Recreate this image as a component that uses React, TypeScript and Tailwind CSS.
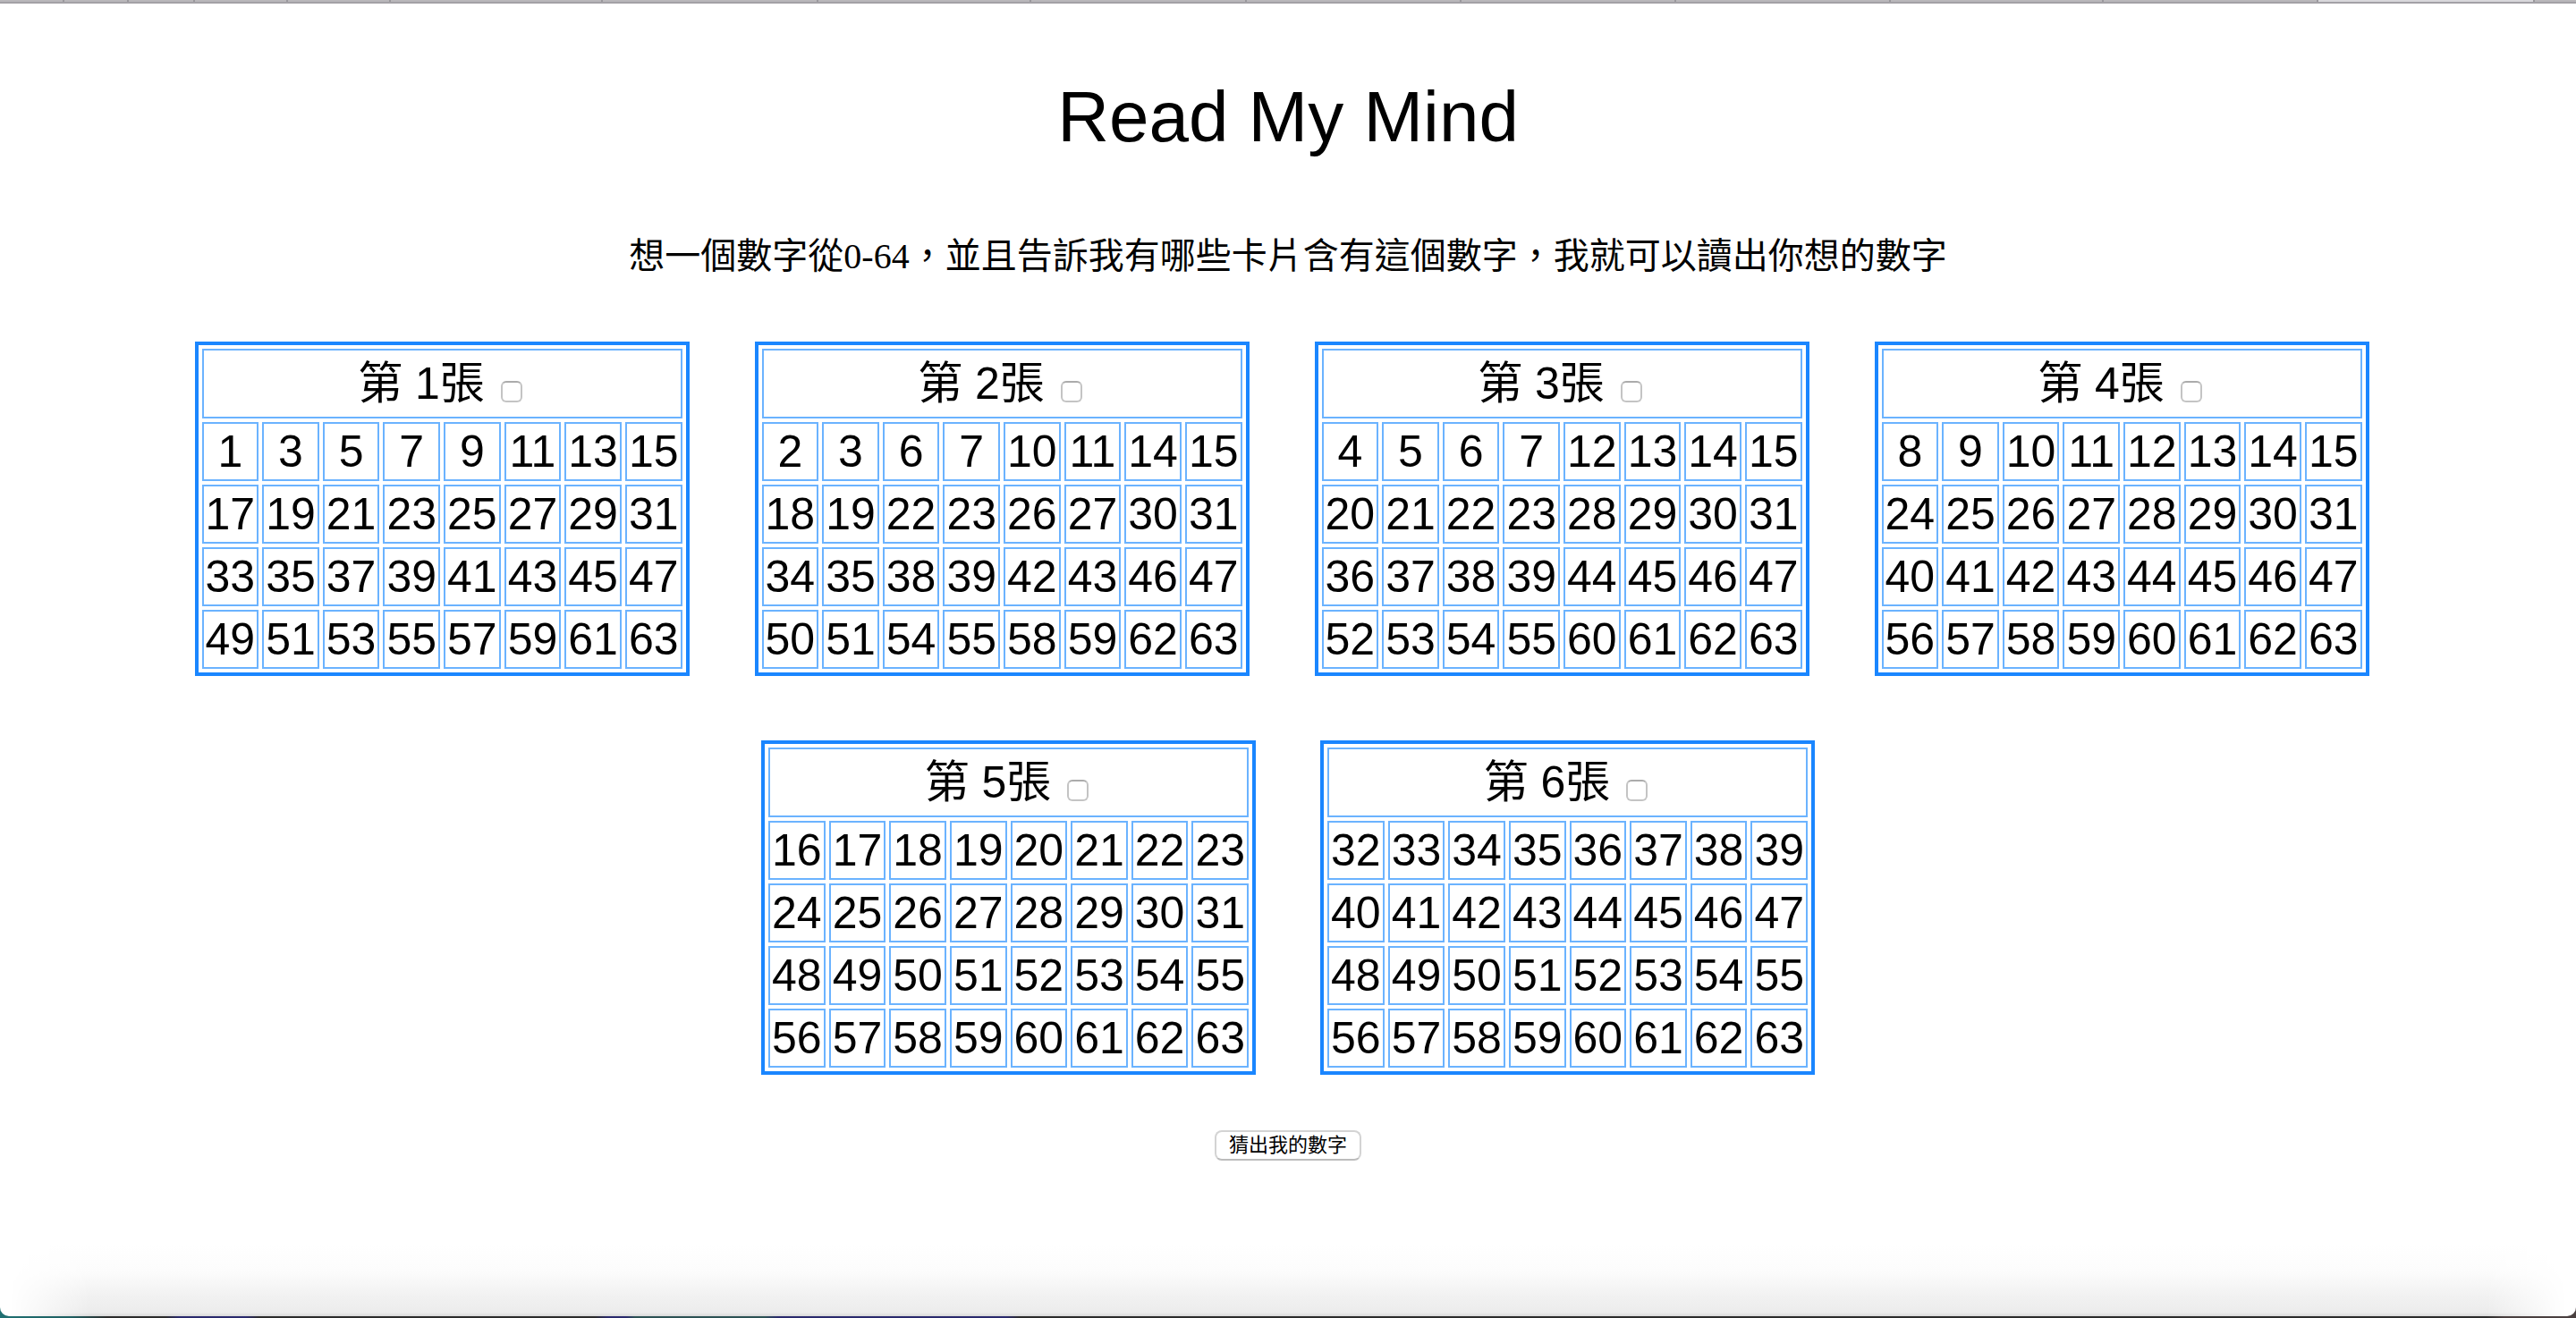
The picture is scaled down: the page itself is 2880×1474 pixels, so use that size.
import React from "react";

const range = Array.from({ length: 64 }, (_, n) => n);
const cards = [0, 1, 2, 3, 4, 5].map((bit) => range.filter((n) => (n >> bit) & 1));

function Card({ index }: { index: number }) {
  const numbers = cards[index];
  const rows = [0, 1, 2, 3].map((r) => numbers.slice(r * 8, r * 8 + 8));
  const id = `card-${index + 1}`;
  return (
    <table className="w-[553px] table-fixed border-separate border-spacing-1 border-4 border-[#1a86ff] text-center text-[50px] leading-[58px]">
      <thead>
        <tr>
          <th colSpan={8} className="h-[78px] border-2 border-[#6bb3ff] p-0 font-normal">
            <div className="flex items-center justify-center gap-[18px] pr-1">
              <label htmlFor={id}>第 {index + 1}張</label>
              <input
                id={id}
                type="checkbox"
                className="mt-[18px] size-6 appearance-none rounded-md border-2 border-[#c4c4c4] border-t-[#ababab] bg-white checked:bg-[#1a86ff]"
              />
            </div>
          </th>
        </tr>
      </thead>
      <tbody>
        {rows.map((row) => (
          <tr key={row[0]}>
            {row.map((n) => (
              <td key={n} className="h-[66px] border-2 border-[#6bb3ff] p-0">
                <div className="flex justify-center">{n}</div>
              </td>
            ))}
          </tr>
        ))}
      </tbody>
    </table>
  );
}

const tabWidths = [72, 72, 74, 104, 115, 237, 241, 238, 241, 240, 240, 240, 238, 240, 242, 46];
const totalWidth = tabWidths.reduce((sum, width) => sum + width, 0);
const activeTab = 14;

export default function App() {
  return (
    <div className="flex min-h-screen flex-col bg-[linear-gradient(90deg,#1f7072_0px,#1f5f62_80px,#2c2c2c_120px,#2c2c2c_185px,#2a2a6e_200px,#2a2a6e_275px,#2c2c2c_290px,#2c2c2c_665px,#2a2a6e_680px,#2a2a6e_700px,#2c5254_710px,#2c5254_855px,#2a2a6e_870px,#2a2a6e_1125px,#2c2c2c_1140px,#2c2c2c_2780px,#4a4040_2800px)] pb-0.5 font-['Liberation_Sans','Noto_Sans_CJK_TC',sans-serif] text-black">
      <div className="flex h-1 border-b-2 border-[#a3a1a6] bg-[#b9b7bb]">
        {tabWidths.map((width, i) => (
          <span
            key={i}
            className={
              i === activeTab
                ? "border-r-2 border-[#99979c] bg-[#d9d8dc]"
                : "border-r-2 border-[#99979c] last:border-r-0"
            }
            style={{ width: `${(width / totalWidth) * 100}%` }}
          />
        ))}
      </div>
      <main className="relative flex grow flex-col items-center overflow-hidden rounded-b-[10px] bg-white">
        <div className="pointer-events-none absolute inset-x-0 bottom-0 h-20 bg-[linear-gradient(180deg,#ffffff_0px,#fcfcfc_30px,#f1f1f1_58px,#ececec_76px,#d8d8d8_80px)] [mask-image:linear-gradient(90deg,transparent_10px,black_100px,black_calc(100%-100px),transparent_calc(100%-10px))]" />
        <h1 className="mt-[81px] text-[80px] leading-[92px]">Read My Mind</h1>
        <p className="mt-20 font-['Liberation_Serif','Noto_Sans_CJK_TC',serif] text-[40px] leading-[60px]">
          想一個數字從0-64，並且告訴我有哪些卡片含有這個數字，我就可以讀出你想的數字
        </p>
        <div className="mt-[65px] flex gap-[73px] pr-[14px]">
          {[0, 1, 2, 3].map((i) => (
            <Card key={i} index={i} />
          ))}
        </div>
        <div className="mt-[72px] flex gap-[72px]">
          {[4, 5].map((i) => (
            <Card key={i} index={i} />
          ))}
        </div>
        <button
          type="button"
          className="mt-[62px] h-[34px] rounded-lg border-2 border-[#d4d4d4] border-b-[#bcbcbc] bg-white px-[14px] text-[22px] leading-[30px]"
        >
          猜出我的數字
        </button>
      </main>
    </div>
  );
}
